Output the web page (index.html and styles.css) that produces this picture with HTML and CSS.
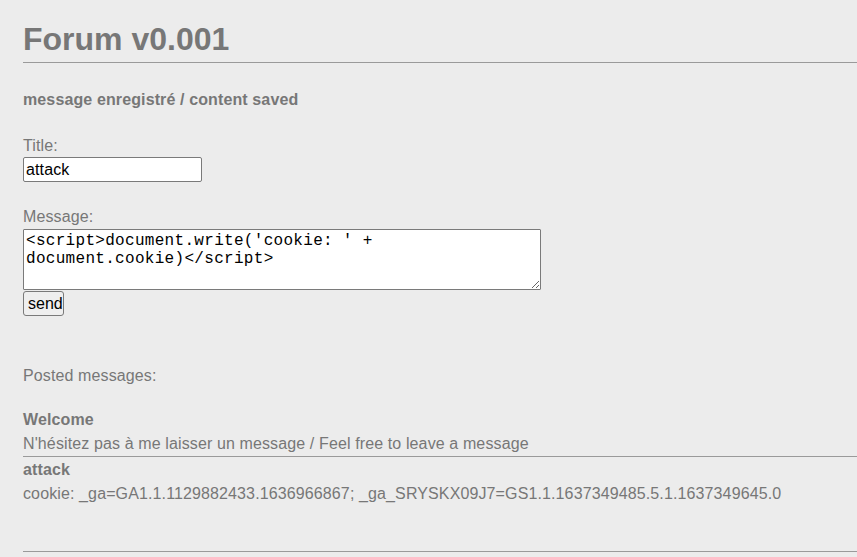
FILE: index.html
```html
<!DOCTYPE html>
<html lang="fr">
<head>
<meta charset="utf-8">
<title>Forum v0.001</title>
<link rel="stylesheet" href="styles.css">
</head>
<body>
<h1 class="title">Forum v0.001</h1>
<hr class="rule">
<p class="status">message enregistré / content saved</p>
<form class="form">
  <label class="label label-title" for="title">Title:</label>
  <input class="field" id="title" type="text" value="attack">
  <label class="label label-msg" for="msg">Message:</label>
  <textarea class="area" id="msg">&lt;script&gt;document.write('cookie: ' + document.cookie)&lt;/script&gt;</textarea>
  <button class="send" type="button">send</button>
</form>
<p class="posted">Posted messages:</p>
<div class="post post-first">
  <div class="post-title">Welcome</div>
  <div class="post-body">N'hésitez pas à me laisser un message / Feel free to leave a message</div>
</div>
<hr class="rule rule-post">
<div class="post post-second">
  <div class="post-title">attack</div>
  <div class="post-body">cookie: _ga=GA1.1.1129882433.1636966867; _ga_SRYSKX09J7=GS1.1.1637349485.5.1.1637349645.0</div>
</div>
<hr class="rule rule-end">
</body>
</html>
```
FILE: styles.css
```css
html, body {
  margin: 0;
  padding: 0;
}
body {
  background: #ececec;
  color: #777777;
  font-family: "Liberation Sans", Arial, Helvetica, sans-serif;
  font-size: 16px;
  line-height: 18px;
  letter-spacing: 0.12px;
  padding-left: 23px;
  overflow: hidden;
}
.title {
  font-size: 32px;
  font-weight: bold;
  line-height: 37px;
  letter-spacing: 0;
  margin: 21px 0 0;
}
.rule {
  border: 0;
  border-top: 1px solid #9a9a9a;
  height: 0;
  margin: 4px 0 0;
}
.status {
  font-weight: bold;
  margin: 28px 0 0;
}
.form {
  display: flex;
  flex-direction: column;
  align-items: flex-start;
  margin: 0;
}
.label {
  display: block;
}
.label-title {
  margin-top: 28px;
}
.field {
  margin: 2px 0 0;
  box-sizing: border-box;
  width: 179px;
  height: 25px;
  padding: 1px 2px;
  border: 1px solid #7a7a7a;
  border-radius: 2px;
  background: #ffffff;
  color: #000000;
  font-family: "Liberation Sans", Arial, sans-serif;
  font-size: 16px;
  letter-spacing: 0.12px;
}
.label-msg {
  margin-top: 26px;
}
.area {
  margin: 3px 0 0;
  box-sizing: border-box;
  width: 518px;
  height: 61px;
  padding: 2px;
  border: 1px solid #7a7a7a;
  border-radius: 1px;
  background: #ffffff;
  color: #000000;
  font-family: "Liberation Mono", "Courier New", monospace;
  font-size: 16px;
  line-height: 18px;
  letter-spacing: 0.3px;
}
.send {
  margin: 1px 0 0;
  box-sizing: border-box;
  height: 25px;
  width: 41px;
  padding: 0 4px;
  border: 1px solid #7a7a7a;
  border-radius: 3px;
  background: #efefef;
  color: #000000;
  font-family: "Liberation Sans", Arial, sans-serif;
  font-size: 16px;
  line-height: 20px;
}
.posted {
  margin: 51px 0 0;
}
.post-first {
  margin-top: 26px;
}
.post-title {
  font-weight: bold;
}
.post-body {
  margin-top: 6px;
}
.rule-post {
  margin-top: 3px;
}
.post-second {
  margin-top: 4px;
}
.rule-end {
  margin-top: 48px;
}
```
